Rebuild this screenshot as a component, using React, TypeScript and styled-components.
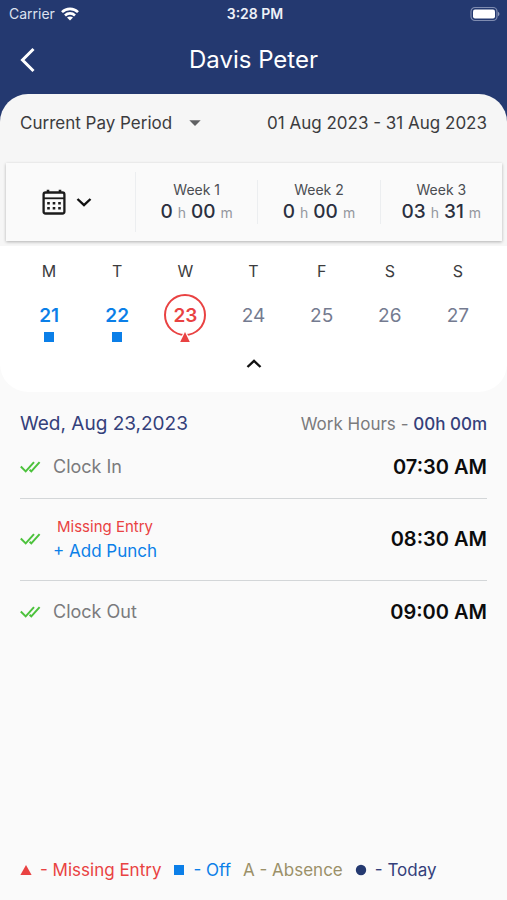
import React from "react";
import styled, { createGlobalStyle } from "styled-components";

const color = {
  navy: "#243970",
  ink: "#3c3c3e",
  muted: "#7b7b7d",
  slate: "#747b90",
  red: "#e94242",
  blue: "#0b7fe8",
  khaki: "#9b9068",
  green: "#4cc23c",
  page: "#fafafa",
  panel: "#f6f6f6",
};

const GlobalStyle = createGlobalStyle`
  * { box-sizing: border-box; }
  body {
    margin: 0;
    background: ${color.page};
    font-family: Inter, "Liberation Sans", sans-serif;
  }
  button, select {
    margin: 0;
    padding: 0;
    border: 0;
    background: none;
    color: inherit;
    font: inherit;
    cursor: pointer;
  }
`;

const Page = styled.div`
  min-height: 100vh;
  display: flex;
  flex-direction: column;
`;

const Header = styled.header`
  background: ${color.navy};
  color: #fff;
`;

const StatusBar = styled.div`
  height: 28px;
  padding: 0 6px 0 9px;
  display: grid;
  grid-template-columns: 1fr auto 1fr;
  align-items: center;
  font-size: 14px;
  line-height: 20px;
`;

const Carrier = styled.span`
  display: flex;
  align-items: center;
  gap: 6px;
  color: #dde2ef;
`;

const Clock = styled.span`
  font-weight: 600;
  color: #eef1f8;
`;

const BatteryIcon = styled.svg`
  justify-self: end;
`;

const NavBar = styled.div`
  height: 66px;
  padding: 0 16px 2px;
  display: grid;
  grid-template-columns: 24px 1fr 24px;
  align-items: center;
`;

const IconButton = styled.button`
  display: flex;
  align-items: center;
  justify-content: center;
`;

const Title = styled.h1`
  margin: 0;
  text-align: center;
  font-size: 24px;
  line-height: 32px;
  font-weight: 400;
`;

const PeriodBar = styled.div`
  height: 58px;
  padding: 0 20px;
  display: flex;
  align-items: center;
  justify-content: space-between;
  border-radius: 28px 28px 0 0;
  background: ${color.panel};
  color: ${color.ink};
  font-size: 17px;
  line-height: 24px;
`;

const PeriodPicker = styled.label`
  display: grid;
  align-items: center;
  > * { grid-area: 1 / 1; }
  svg { justify-self: end; pointer-events: none; }
`;

const PeriodSelect = styled.select`
  appearance: none;
  padding-right: 28px;
`;

const Summary = styled.section`
  padding: 11px 5px 5px 6px;
  background: ${color.panel};
`;

const SummaryCard = styled.div`
  height: 78px;
  display: grid;
  grid-template-columns: 129px repeat(3, 1fr);
  align-items: center;
  background: ${color.page};
  box-shadow: 0 1px 3px rgba(0, 0, 0, 0.28);
`;

const CalendarButton = styled.button`
  display: flex;
  align-items: center;
  justify-content: center;
  gap: 7px;
  height: 60px;
  padding-right: 4px;
`;

const Week = styled.div<{ $tall?: boolean }>`
  height: ${(p) => (p.$tall ? 60 : 44)}px;
  display: flex;
  flex-direction: column;
  justify-content: center;
  align-items: center;
  border-left: 1px solid #eceef0;
`;

const WeekName = styled.span`
  color: #4a4d52;
  font-size: 14px;
  line-height: 20px;
`;

const Hours = styled.span`
  display: flex;
  align-items: baseline;
  gap: 5px;
  color: #2b3040;
  font-size: 19px;
  line-height: 24px;
  font-weight: 500;
`;

const Unit = styled.span`
  color: #94979e;
  font-size: 14px;
  font-weight: 400;
`;

const Calendar = styled.section`
  padding: 15px 15px 16px;
  display: flex;
  flex-direction: column;
  align-items: center;
  border-radius: 0 0 28px 28px;
  background: #fff;
`;

const Days = styled.div`
  align-self: stretch;
  margin-bottom: 16px;
  display: grid;
  grid-template-columns: repeat(7, 1fr);
`;

const Day = styled.div`
  display: flex;
  flex-direction: column;
  align-items: center;
  gap: 13px;
`;

const DayLetter = styled.span`
  color: ${color.ink};
  font-size: 16px;
  line-height: 20px;
`;

type Kind = "off" | "missing" | "plain";

const DateButton = styled.button<{ $kind: Kind }>`
  position: relative;
  width: 42px;
  height: 42px;
  padding-top: 1px;
  border: 2px solid ${(p) => (p.$kind === "missing" ? color.red : "transparent")};
  border-radius: 50%;
  color: ${(p) =>
    p.$kind === "missing" ? color.red : p.$kind === "off" ? color.blue : color.slate};
  font-size: 19px;
  line-height: 24px;
  font-weight: ${(p) => (p.$kind === "plain" ? 400 : 600)};
`;

const DateBadge = styled.span`
  position: absolute;
  left: 0;
  right: 0;
  bottom: -9px;
  display: flex;
  justify-content: center;
`;

const Details = styled.main`
  flex: 1;
  padding: 20px 20px 0;
`;

const DetailsHead = styled.div`
  display: flex;
  align-items: center;
  justify-content: space-between;
  line-height: 24px;
`;

const DateTitle = styled.h2`
  margin: 0;
  color: #34407a;
  font-size: 19px;
  font-weight: 400;
`;

const WorkHours = styled.span`
  color: ${color.muted};
  font-size: 17px;
  strong { color: #34407a; font-weight: 500; }
`;

const PunchList = styled.ul`
  margin: 0;
  padding: 0;
  list-style: none;
`;

const Punch = styled.li<{ $tall?: boolean }>`
  min-height: ${(p) => (p.$tall ? 82 : 62)}px;
  padding-bottom: ${(p) => (p.$tall ? 2 : 0)}px;
  display: flex;
  align-items: center;
  gap: 12px;
  & + & { border-top: 1px solid #d3d6d8; }
`;

const PunchBody = styled.div`
  flex: 1;
  display: flex;
  flex-direction: column;
  align-items: flex-start;
  color: ${color.muted};
  font-size: 18px;
  line-height: 24px;
`;

const MissingNote = styled.span`
  padding-left: 4px;
  color: ${color.red};
  font-size: 15px;
`;

const AddPunch = styled.button`
  color: ${color.blue};
  font-size: 17px;
`;

const PunchTime = styled.time`
  color: #0c0c0d;
  font-size: 20px;
  line-height: 24px;
  font-weight: 600;
`;

const Legend = styled.footer`
  padding: 18px 20px;
  display: flex;
  align-items: center;
  gap: 12px;
  font-size: 17px;
  line-height: 24px;
`;

const LegendItem = styled.span<{ $color: string }>`
  display: flex;
  align-items: center;
  gap: 8px;
  white-space: nowrap;
  color: ${(p) => p.$color};
`;

const Square = () => (
  <svg width="12" height="12" viewBox="0 0 12 12" aria-hidden="true">
    <rect x="1" y="1" width="10" height="10" fill={color.blue} />
  </svg>
);

const Triangle = () => (
  <svg width="12" height="12" viewBox="0 0 12 12" aria-hidden="true">
    <path d="M6 1 L11.6 11 H0.4 Z" fill={color.red} />
  </svg>
);

const OutlinedTriangle = () => (
  <svg width="14" height="14" viewBox="0 0 14 14" aria-hidden="true">
    <path d="M7 3 L11.8 13 H2.2 Z" fill={color.red} stroke="#fff" strokeWidth="2.4" paintOrder="stroke" />
  </svg>
);

const Dot = () => (
  <svg width="12" height="12" viewBox="0 0 12 12" aria-hidden="true">
    <circle cx="6" cy="6" r="5.2" fill={color.navy} />
  </svg>
);

const Wifi = () => (
  <svg width="18" height="14" viewBox="0 0 18 14" fill="none" stroke="#fff" strokeWidth="2.6" aria-hidden="true">
    <path d="M1 5.2 C5.4 0.8 12.6 0.8 17 5.2" />
    <path d="M4 8.5 C6.8 5.7 11.2 5.7 14 8.5" />
    <path d="M9 13.6 L6 10.6 C7.7 9 10.3 9 12 10.6 Z" fill="#fff" stroke="none" />
  </svg>
);

const Battery = () => (
  <BatteryIcon width="32" height="16" viewBox="0 0 32 16" aria-hidden="true">
    <rect x="2" y="1.5" width="26" height="13" rx="4" fill="none" stroke="#7f8cb0" strokeWidth="1.2" />
    <rect x="4" y="3.5" width="22" height="9" rx="2" fill="#fff" />
    <path d="M29 5.8 C31 6.6 31 9.4 29 10.2 Z" fill="#8c98b8" />
  </BatteryIcon>
);

const BackArrow = () => (
  <svg width="24" height="28" viewBox="0 0 24 28" fill="none" stroke="#fff" strokeWidth="3" aria-hidden="true">
    <path d="M17.5 3 L6.5 14 L17.5 25" />
  </svg>
);

const Chevron = ({ up = false }: { up?: boolean }) => (
  <svg width="22" height="24" viewBox="0 0 22 24" fill="none" stroke="#111" strokeWidth="2.4" aria-hidden="true">
    <path d={up ? "M4.5 15 L11 8.8 L17.5 15" : "M4.5 9 L11 15.2 L17.5 9"} />
  </svg>
);

const CalendarIcon = () => (
  <svg width="24" height="26" viewBox="0 0 24 26" fill="none" stroke="#1b1b1b" aria-hidden="true">
    <rect x="1.6" y="3.5" width="20.8" height="21" rx="2" strokeWidth="2.3" />
    <path d="M1.5 9.3 H22.5" strokeWidth="1.8" />
    <path d="M6 0.8 V4 M18 0.8 V4" strokeWidth="2.6" />
    <path d="M5.2 14.2 h2.6 m2.9 0 h2.6 m2.9 0 h2.6 M5.2 19.2 h2.6 m2.9 0 h2.6 m2.9 0 h2.6" strokeWidth="2.5" />
  </svg>
);

const DoubleCheck = () => (
  <svg width="21" height="14" viewBox="0 0 21 14" fill="none" stroke={color.green} strokeWidth="2" aria-hidden="true">
    <path d="M0.8 6.5 L5.7 11.4 L14 2.2" />
    <path d="M9.6 9.8 L11.3 11.4 L19.6 2.2" />
  </svg>
);

const Caret = () => (
  <svg width="12" height="8" viewBox="0 0 12 8" aria-hidden="true">
    <path d="M0.3 1.3 H11.7 L6 7 Z" fill="#606163" />
  </svg>
);

const weeks = [
  { name: "Week 1", h: "0", m: "00" },
  { name: "Week 2", h: "0", m: "00" },
  { name: "Week 3", h: "03", m: "31" },
];

const days: { letter: string; date: number; kind: Kind }[] = [
  { letter: "M", date: 21, kind: "off" },
  { letter: "T", date: 22, kind: "off" },
  { letter: "W", date: 23, kind: "missing" },
  { letter: "T", date: 24, kind: "plain" },
  { letter: "F", date: 25, kind: "plain" },
  { letter: "S", date: 26, kind: "plain" },
  { letter: "S", date: 27, kind: "plain" },
];

export default function App() {
  return (
    <Page>
      <GlobalStyle />
      <Header>
        <StatusBar>
          <Carrier>
            Carrier
            <Wifi />
          </Carrier>
          <Clock>3:28 PM</Clock>
          <Battery />
        </StatusBar>
        <NavBar>
          <IconButton type="button" aria-label="Back">
            <BackArrow />
          </IconButton>
          <Title>Davis Peter</Title>
        </NavBar>
        <PeriodBar>
          <PeriodPicker>
            <PeriodSelect aria-label="Pay period" defaultValue="current">
              <option value="current">Current Pay Period</option>
            </PeriodSelect>
            <Caret />
          </PeriodPicker>
          <span>01 Aug 2023 - 31 Aug 2023</span>
        </PeriodBar>
      </Header>

      <Summary>
        <SummaryCard>
          <CalendarButton type="button" aria-label="Choose view">
            <CalendarIcon />
            <Chevron />
          </CalendarButton>
          {weeks.map((w, i) => (
            <Week key={w.name} $tall={i === 0}>
              <WeekName>{w.name}</WeekName>
              <Hours>
                {w.h}
                <Unit>h</Unit>
                {w.m}
                <Unit>m</Unit>
              </Hours>
            </Week>
          ))}
        </SummaryCard>
      </Summary>

      <Calendar>
        <Days>
          {days.map((d) => (
            <Day key={d.date}>
              <DayLetter>{d.letter}</DayLetter>
              <DateButton type="button" $kind={d.kind}>
                {d.date}
                {d.kind !== "plain" && (
                  <DateBadge>{d.kind === "off" ? <Square /> : <OutlinedTriangle />}</DateBadge>
                )}
              </DateButton>
            </Day>
          ))}
        </Days>
        <IconButton type="button" aria-label="Collapse calendar">
          <Chevron up />
        </IconButton>
      </Calendar>

      <Details>
        <DetailsHead>
          <DateTitle>Wed, Aug 23,2023</DateTitle>
          <WorkHours>
            Work Hours - <strong>00h 00m</strong>
          </WorkHours>
        </DetailsHead>
        <PunchList>
          <Punch>
            <DoubleCheck />
            <PunchBody>Clock In</PunchBody>
            <PunchTime>07:30 AM</PunchTime>
          </Punch>
          <Punch $tall>
            <DoubleCheck />
            <PunchBody>
              <MissingNote>Missing Entry</MissingNote>
              <AddPunch type="button">+ Add Punch</AddPunch>
            </PunchBody>
            <PunchTime>08:30 AM</PunchTime>
          </Punch>
          <Punch>
            <DoubleCheck />
            <PunchBody>Clock Out</PunchBody>
            <PunchTime>09:00 AM</PunchTime>
          </Punch>
        </PunchList>
      </Details>

      <Legend>
        <LegendItem $color={color.red}>
          <Triangle />- Missing Entry
        </LegendItem>
        <LegendItem $color={color.blue}>
          <Square />- Off
        </LegendItem>
        <LegendItem $color={color.khaki}>A - Absence</LegendItem>
        <LegendItem $color="#34407a">
          <Dot />- Today
        </LegendItem>
      </Legend>
    </Page>
  );
}
